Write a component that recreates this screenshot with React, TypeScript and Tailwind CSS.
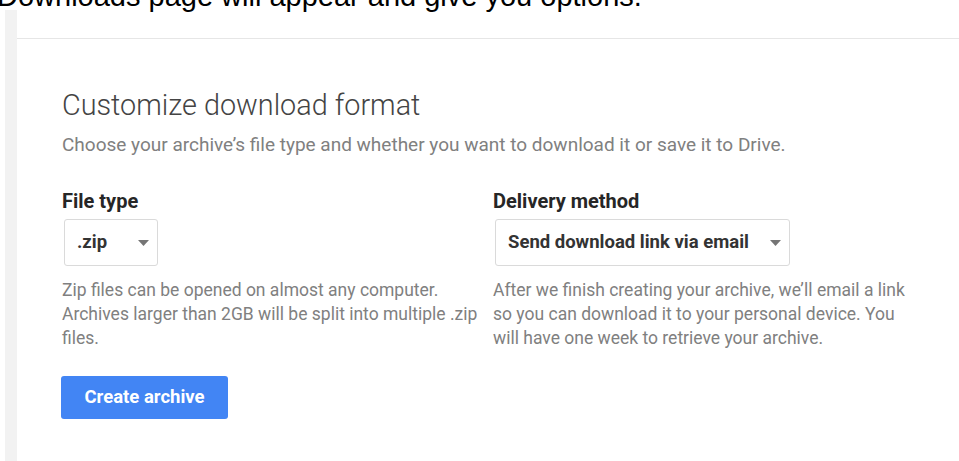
const roboto = { fontFamily: "Roboto, 'Noto Sans', sans-serif" };

const Caret = () => (
  <svg width="11" height="6" viewBox="0 0 11 6" className="shrink-0">
    <path d="M0 0h11L5.5 6z" fill="#757575" />
  </svg>
);

const Dropdown = ({ label, width }: { label: string; width: string }) => (
  <div
    className={`flex h-[47px] items-center justify-between rounded-[3px] border border-[#dadada] bg-white pl-[12px] pr-[8px] ${width}`}
  >
    <span className="text-[18.5px] font-bold text-[#333]">{label}</span>
    <Caret />
  </div>
);

const options = [
  {
    title: "File type",
    value: ".zip",
    width: "w-[94px]",
    note: "Zip files can be opened on almost any computer. Archives larger than 2GB will be split into multiple .zip files.",
  },
  {
    title: "Delivery method",
    value: "Send download link via email",
    width: "w-[295px]",
    note: "After we finish creating your archive, we\u2019ll email a link so you can download it to your personal device. You will have one week to retrieve your archive.",
  },
];

export default function App() {
  return (
    <div className="relative h-[461px] w-[959px] overflow-hidden bg-white">
      <p
        className="-mt-[18px] ml-[-3px] whitespace-nowrap text-[29px] leading-[28px] text-black"
        style={{ fontFamily: "'Liberation Sans', Arial, sans-serif" }}
      >
        Downloads page will appear and give you options.
      </p>

      <div className="flex h-[500px]">
        <div className="ml-[5px] w-[12px] shrink-0 bg-[#f2f2f2]" />
        <div className="flex-1" style={roboto}>
          <div className="h-[29px] border-b border-[#e6e6e6]" />
          <div className="pl-[45px] pt-[48px]">
            <h2 className="text-[28.8px] font-light leading-[36px] text-[#444]">Customize download format</h2>
            <p className="mt-[10px] text-[19px] leading-[24px] text-[#808080]">
              Choose your archive&rsquo;s file type and whether you want to download it or save it to Drive.
            </p>

            <div className="mt-[32px] grid grid-cols-[431px_431px]">
              {options.map((opt) => (
                <div key={opt.title}>
                  <h3 className="text-[20px] font-bold leading-[24px] text-[#262626]">{opt.title}</h3>
                  <div className="mt-[6px] pl-[2px]">
                    <Dropdown label={opt.value} width={opt.width} />
                  </div>
                  <p className="mt-[12px] w-[420px] text-[17.5px] leading-[24px] text-[#808080]">{opt.note}</p>
                </div>
              ))}
            </div>

            <button className="-ml-[1px] mt-[26px] h-[43px] w-[167px] rounded-[3px] bg-[#4285f4] text-[18.5px] font-bold text-white">
              Create archive
            </button>
          </div>
        </div>
      </div>
    </div>
  );
}
